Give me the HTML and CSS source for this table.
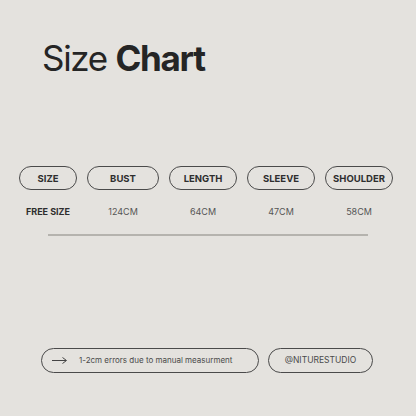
FILE: index.html
```html
<!DOCTYPE html>
<html>
<head>
<meta charset="utf-8">
<link rel="stylesheet" href="styles.css">
</head>
<body>
<div class="page">
  <h1 class="title">Size <b>Chart</b></h1>
  <div class="table">
    <div class="pill head">SIZE</div>
    <div class="pill head">BUST</div>
    <div class="pill head">LENGTH</div>
    <div class="pill head">SLEEVE</div>
    <div class="pill head">SHOULDER</div>
    <div class="val strong">FREE SIZE</div>
    <div class="val">124CM</div>
    <div class="val">64CM</div>
    <div class="val">47CM</div>
    <div class="val">58CM</div>
  </div>
  <div class="rule"></div>
  <div class="footer">
    <div class="pill note">
      <svg class="arrow" width="16" height="8" viewBox="0 0 16 8"><path d="M0 4.5H14M10.5 1.5L14.5 4.5L10.5 7.5" fill="none" stroke="#444" stroke-width="1"/></svg>
      <span>1-2cm errors due to manual measurment</span>
    </div>
    <div class="pill handle">@NITURESTUDIO</div>
  </div>
</div>
</body>
</html>
```
FILE: styles.css
```css
html, body {
  margin: 0;
  padding: 0;
  background: #e4e2de;
}
.page {
  width: 416px;
  height: 416px;
  box-sizing: border-box;
  font-family: Inter, "Liberation Sans", sans-serif;
  color: #2a2a2a;
  display: flex;
  flex-direction: column;
}
.title {
  margin: 36px 0 0 42px;
  font-size: 35px;
  font-weight: 400;
  letter-spacing: -1.3px;
  line-height: 44px;
  color: #252525;
}
.title b {
  font-weight: 700;
}
.table {
  margin: 86px 0 0 19px;
  display: grid;
  grid-template-columns: 58px 72px 68px 68px 68px;
  column-gap: 10px;
  row-gap: 16px;
}
.pill {
  box-sizing: border-box;
  border: 1.2px solid #4a4a4a;
  border-radius: 13px;
  display: flex;
  align-items: center;
  justify-content: center;
}
.head {
  height: 24px;
  font-size: 9.5px;
  font-weight: 700;
  color: #2e2e2e;
}
.val {
  text-align: center;
  font-size: 9px;
  line-height: 12px;
  color: #555;
}
.val.strong {
  font-weight: 700;
  color: #2e2e2e;
}
.rule {
  margin: 16px 0 0 48px;
  width: 320px;
  height: 1.5px;
  background: #b5b3ae;
}
.footer {
  margin: 112px 0 0 41px;
  display: flex;
  gap: 9px;
}
.note {
  width: 218px;
  height: 25px;
  justify-content: flex-start;
  padding-left: 10px;
  font-size: 8px;
  color: #4a4a4a;
  gap: 11px;
}
.handle {
  width: 105px;
  height: 25px;
  font-size: 8.5px;
  color: #4a4a4a;
}
```
